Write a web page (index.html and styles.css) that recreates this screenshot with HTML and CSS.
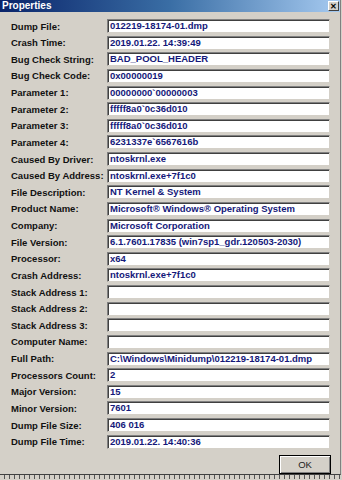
FILE: index.html
```html
<!DOCTYPE html>
<html lang="en">
<head>
    <meta charset="UTF-8">
    <title>Properties</title>
    <link rel="stylesheet" href="styles.css">
</head>
<body>
    <div class="window">
        <div class="titlebar">
            <span class="title">Properties</span>
            <span class="close">&#x2715;</span>
        </div>
        <div class="content">
            <div class="row"><label>Dump File:</label><div class="field">012219-18174-01.dmp</div></div>
            <div class="row"><label>Crash Time:</label><div class="field">2019.01.22. 14:39:49</div></div>
            <div class="row"><label>Bug Check String:</label><div class="field">BAD_POOL_HEADER</div></div>
            <div class="row"><label>Bug Check Code:</label><div class="field">0x00000019</div></div>
            <div class="row"><label>Parameter 1:</label><div class="field">00000000`00000003</div></div>
            <div class="row"><label>Parameter 2:</label><div class="field">fffff8a0`0c36d010</div></div>
            <div class="row"><label>Parameter 3:</label><div class="field">fffff8a0`0c36d010</div></div>
            <div class="row"><label>Parameter 4:</label><div class="field">6231337e`6567616b</div></div>
            <div class="row"><label>Caused By Driver:</label><div class="field">ntoskrnl.exe</div></div>
            <div class="row"><label>Caused By Address:</label><div class="field">ntoskrnl.exe+7f1c0</div></div>
            <div class="row"><label>File Description:</label><div class="field">NT Kernel &amp; System</div></div>
            <div class="row"><label>Product Name:</label><div class="field">Microsoft&reg; Windows&reg; Operating System</div></div>
            <div class="row"><label>Company:</label><div class="field">Microsoft Corporation</div></div>
            <div class="row"><label>File Version:</label><div class="field">6.1.7601.17835 (win7sp1_gdr.120503-2030)</div></div>
            <div class="row"><label>Processor:</label><div class="field">x64</div></div>
            <div class="row"><label>Crash Address:</label><div class="field">ntoskrnl.exe+7f1c0</div></div>
            <div class="row"><label>Stack Address 1:</label><div class="field"></div></div>
            <div class="row"><label>Stack Address 2:</label><div class="field"></div></div>
            <div class="row"><label>Stack Address 3:</label><div class="field"></div></div>
            <div class="row"><label>Computer Name:</label><div class="field"></div></div>
            <div class="row"><label>Full Path:</label><div class="field">C:\Windows\Minidump\012219-18174-01.dmp</div></div>
            <div class="row"><label>Processors Count:</label><div class="field">2</div></div>
            <div class="row"><label>Major Version:</label><div class="field">15</div></div>
            <div class="row"><label>Minor Version:</label><div class="field">7601</div></div>
            <div class="row"><label>Dump File Size:</label><div class="field">406 016</div></div>
            <div class="row"><label>Dump File Time:</label><div class="field">2019.01.22. 14:40:36</div></div>
            <div class="buttons">
                <button class="btn-ok">OK</button>
            </div>
        </div>
    </div>
    <div class="behind"></div>
</body>
</html>
```

FILE: styles.css
```css
body {
    margin: 0;
    padding: 0;
    background-color: #d4d0c8;
    font-family: 'Liberation Sans', Arial, sans-serif;
    width: 342px;
    height: 480px;
    overflow: hidden;
}
.window {
    width: 341px;
    height: 475px;
    background-color: #d4d0c8;
    border-right: 1px solid #808080;
    border-bottom: 1px solid #404040;
    box-sizing: border-box;
    display: flex;
    flex-direction: column;
}
.titlebar {
    height: 13px;
    background: linear-gradient(to right, #0a246a, #3a6ea5 50%, #a6caf0);
    display: flex;
    align-items: center;
    justify-content: space-between;
    padding: 0 1px 0 2px;
}
.title {
    color: white;
    font-weight: bold;
    font-size: 10px;
}
.close {
    width: 11px;
    height: 10px;
    background-color: #d4d0c8;
    border: 1px solid;
    border-color: #fff #404040 #404040 #fff;
    font-size: 8px;
    font-weight: bold;
    line-height: 9px;
    text-align: center;
    color: #000;
    box-sizing: border-box;
}
.content {
    padding: 6px 0 0 11px;
    flex: 1;
}
.row {
    height: 16.64px;
    display: flex;
    align-items: center;
}
label {
    width: 96px;
    font-size: 9.5px;
    font-weight: bold;
    color: #111;
}
.field {
    width: 223px;
    height: 14px;
    box-sizing: border-box;
    background: white;
    border: 1px solid;
    border-color: #808080 #d4d0c8 #d4d0c8 #808080;
    box-shadow: inset 1px 1px 0 #404040;
    color: #14187a;
    font-size: 9.5px;
    font-weight: bold;
    line-height: 12px;
    padding-left: 2px;
    white-space: nowrap;
    overflow: hidden;
}
.buttons {
    display: flex;
    justify-content: flex-end;
    padding: 5px 9px 0 0;
}
.btn-ok {
    width: 52px;
    height: 19px;
    background: #d4d0c8;
    border: 1px solid #000;
    box-shadow: inset 1px 1px 0 #fff, inset -1px -1px 0 #808080;
    font-family: 'Liberation Sans', Arial, sans-serif;
    font-size: 9.5px;
    color: #222;
    padding: 0;
}
.behind {
    height: 4px;
    background: repeating-linear-gradient(to right, #d4d0c8 0 4px, #555 4px 5px);
}
```
